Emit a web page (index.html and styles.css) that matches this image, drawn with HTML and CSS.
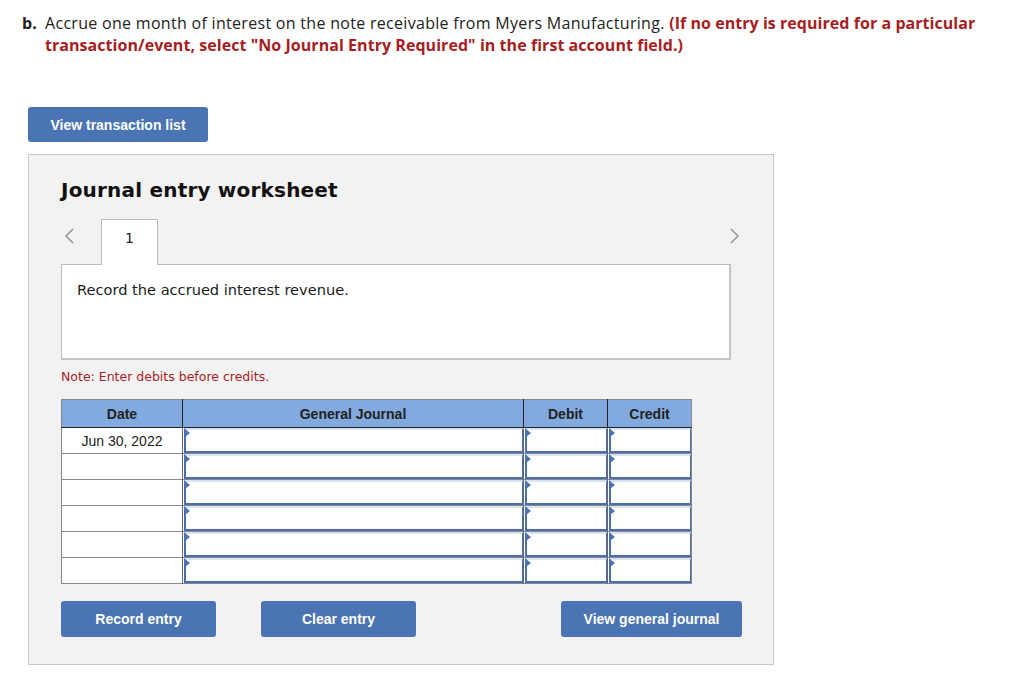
FILE: index.html
```html
<!DOCTYPE html>
<html>
<head>
<meta charset="utf-8">
<link rel="stylesheet" href="styles.css">
</head>
<body>
<div class="question">
  <span class="qlabel">b.</span>
  <p class="qtext">Accrue one month of interest on the note receivable from Myers Manufacturing. <strong class="warn">(If no entry is required for a particular transaction/event, select "No Journal Entry Required" in the first account field.)</strong></p>
</div>

<button class="btn btn-list">View transaction list</button>

<div class="panel">
  <h2 class="title">Journal entry worksheet</h2>
  <div class="tabs">
    <span class="arrow">
      <svg width="12" height="18" viewBox="0 0 12 18"><path d="M10 2 L3 9 L10 16" fill="none" stroke="#999" stroke-width="1.6"/></svg>
    </span>
    <div class="tab">1</div>
    <span class="spacer"></span>
    <span class="arrow arrow-r">
      <svg width="12" height="18" viewBox="0 0 12 18"><path d="M2 2 L9 9 L2 16" fill="none" stroke="#999" stroke-width="1.6"/></svg>
    </span>
  </div>
  <div class="desc">Record the accrued interest revenue.</div>
  <p class="note">Note: Enter debits before credits.</p>

  <table class="journal">
    <thead>
      <tr><th class="c-date">Date</th><th class="c-acct">General Journal</th><th class="c-num">Debit</th><th class="c-num">Credit</th></tr>
    </thead>
    <tbody>
      <tr><td class="date">Jun 30, 2022</td><td><div class="inp"></div></td><td><div class="inp"></div></td><td><div class="inp"></div></td></tr>
      <tr><td class="date"></td><td><div class="inp"></div></td><td><div class="inp"></div></td><td><div class="inp"></div></td></tr>
      <tr><td class="date"></td><td><div class="inp"></div></td><td><div class="inp"></div></td><td><div class="inp"></div></td></tr>
      <tr><td class="date"></td><td><div class="inp"></div></td><td><div class="inp"></div></td><td><div class="inp"></div></td></tr>
      <tr><td class="date"></td><td><div class="inp"></div></td><td><div class="inp"></div></td><td><div class="inp"></div></td></tr>
      <tr><td class="date"></td><td><div class="inp"></div></td><td><div class="inp"></div></td><td><div class="inp"></div></td></tr>
    </tbody>
  </table>

  <div class="actions">
    <button class="btn btn-act">Record entry</button>
    <button class="btn btn-act">Clear entry</button>
    <span class="spacer"></span>
    <button class="btn btn-view">View general journal</button>
  </div>
</div>
</body>
</html>
```

FILE: styles.css
```css
* { box-sizing: border-box; }
body {
  margin: 0;
  background: #fff;
  font-family: "Open Sans", "Liberation Sans", sans-serif;
  color: #222;
}
.question {
  display: flex;
  padding: 12px 30px 0 22px;
  font-size: 16px;
  line-height: 22px;
}
.qlabel {
  font-weight: 700;
  width: 23px;
  flex: none;
}
.qtext {
  margin: 0;
  letter-spacing: 0.3px;
}
.warn {
  color: #a61e22;
  font-weight: 700;
  letter-spacing: 0.05px;
}
.btn {
  border: none;
  border-radius: 3px;
  background: #4a74b3;
  color: #fff;
  font-family: "Liberation Sans", Arial, sans-serif;
  font-weight: 700;
  font-size: 14px;
  cursor: pointer;
}
.btn-list {
  display: block;
  margin: 51px 0 0 28px;
  width: 180px;
  height: 35px;
}
.panel {
  margin: 12px 0 0 28px;
  width: 746px;
  height: 511px;
  background: #f2f2f2;
  border: 1px solid #c8c8c8;
  padding: 0 0 0 32px;
}
.title {
  margin: 22px 0 0 0;
  font-family: "DejaVu Sans", Verdana, sans-serif;
  font-size: 20px;
  font-weight: 700;
  color: #111;
  line-height: 26px;
  letter-spacing: 0.2px;
}
.tabs {
  display: flex;
  align-items: flex-start;
  margin-top: 16px;
  width: 680px;
}
.arrow {
  display: block;
  width: 40px;
  padding: 8px 0 0 2px;
}
.arrow-r { width: 12px; padding: 8px 0 0 0; }
.spacer { flex: 1; }
.tab {
  width: 57px;
  height: 46px;
  background: #fff;
  border: 1px solid #bbb;
  border-bottom: none;
  text-align: center;
  font-family: "DejaVu Sans", Verdana, sans-serif;
  font-size: 14px;
  padding-top: 10px;
  color: #222;
  margin-bottom: -1px;
  position: relative;
  z-index: 1;
}
.desc {
  width: 670px;
  height: 96px;
  background: #fff;
  border: 1px solid #bbb;
  border-right: 2px solid #c4c4c4;
  border-bottom: 2px solid #c4c4c4;
  padding: 16px 0 0 15px;
  font-family: "DejaVu Sans", Verdana, sans-serif;
  font-size: 14.6px;
  color: #1a1a1a;
}
.note {
  margin: 9px 0 0 0;
  font-family: "DejaVu Sans", Verdana, sans-serif;
  font-size: 12.5px;
  color: #a61e22;
  line-height: 16px;
}
.journal {
  margin-top: 14px;
  border-collapse: collapse;
  border: 1px solid #888;
  font-family: "Liberation Sans", Arial, sans-serif;
  font-size: 14px;
}
.journal th {
  background: #83aade;
  color: #222;
  font-weight: 700;
  font-size: 14px;
  height: 28px;
  padding: 0;
  border-left: 1px solid #222;
  border-bottom: 1px solid #222;
}
.journal th:first-child { border-left: none; }
.c-date { width: 121px; }
.c-acct { width: 341px; }
.c-num { width: 84px; }
.journal td {
  height: 26px;
  padding: 0;
  border-top: 1px solid #888;
  border-left: 1px solid #666;
  background: #fff;
  vertical-align: top;
}
.journal td.date {
  border-left: none;
  text-align: center;
  color: #222;
  vertical-align: middle;
  line-height: 24px;
}
.journal tr:first-child td { border-top: none; }
.inp {
  position: relative;
  height: 25px;
  margin-left: 1px;
  border-left: 2px solid #4a6fb0;
  border-bottom: 2px solid #4a6fb0;
  border-right: 1px solid #4a6fb0;
  border-top: 2px solid #d9e4f3;
  background: #fff;
}
.inp::before {
  content: "";
  position: absolute;
  left: -1px;
  top: -1px;
  border-left: 5px solid #4a74b4;
  border-top: 4px solid transparent;
  border-bottom: 4px solid transparent;
}
.actions {
  display: flex;
  width: 681px;
  gap: 45px;
  margin-top: 17px;
}
.btn-act {
  width: 155px;
  height: 36px;
}
.btn-view {
  width: 181px;
  height: 36px;
}
```
